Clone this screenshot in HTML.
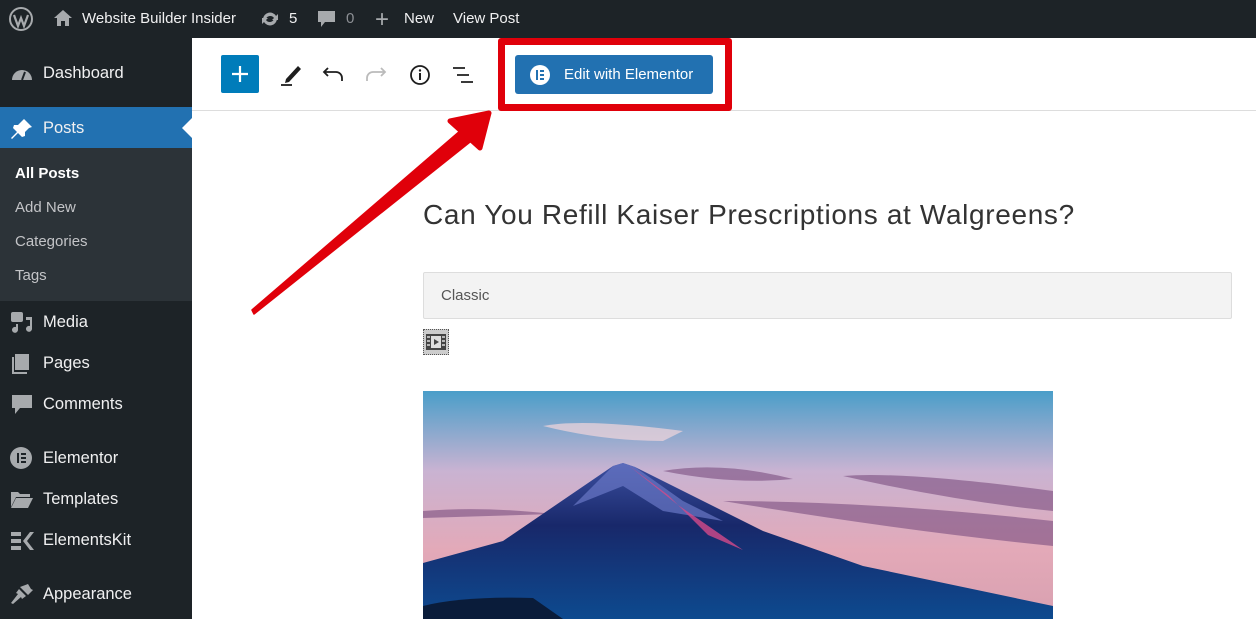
<!DOCTYPE html>
<html><head><meta charset="utf-8"><style>
*{margin:0;padding:0;box-sizing:border-box}
body{width:1256px;height:619px;overflow:hidden;background:#fff;font-family:"Liberation Sans",sans-serif;position:relative}
.bar{position:absolute;left:0;top:0;width:1256px;height:38px;background:#1d2327;color:#f0f0f1;font-size:15px}
.bar span{position:absolute;top:10px}
.side{position:absolute;left:0;top:38px;width:192px;height:581px;background:#1d2327}
.mi{position:absolute;left:43px;color:#f0f0f1;font-size:16.5px}
.ic{position:absolute;left:10px;width:24px;height:22px}
.sub{position:absolute;left:15px;color:#c3c4c7;font-size:15px}
.a{position:absolute}
</style></head><body>
<div class="bar">
<svg class="a" style="left:9px;top:7px" width="24" height="24" viewBox="0 0 24 24"><circle cx="12" cy="12" r="11" fill="none" stroke="#a7aaad" stroke-width="2"/><path d="M5 8l4 11 3-8 3 8 4-11" fill="none" stroke="#a7aaad" stroke-width="2.2"/></svg>
<svg class="a" style="left:53px;top:9px" width="20" height="18" viewBox="0 0 20 18"><path d="M10 1L1 9h3v8h4v-5h4v5h4V9h3z" fill="#a7aaad"/></svg>
<span style="left:82px">Website Builder Insider</span>
<svg class="a" style="left:259px;top:10px" width="22" height="18" viewBox="0 0 22 18"><path d="M4 9a7 7 0 0 1 13-3l2-2v6h-6l2-2a4.5 4.5 0 0 0-8 1zM18 9a7 7 0 0 1-13 3l-2 2V8h6l-2 2a4.5 4.5 0 0 0 8-1z" fill="#a7aaad"/></svg>
<span style="left:289px">5</span>
<svg class="a" style="left:317px;top:10px" width="20" height="20" viewBox="0 0 20 20"><path d="M1 1h17v11H8l-4 5v-5H1z" fill="#a7aaad"/></svg>
<span style="left:346px;color:#8c8f94">0</span>
<span style="left:375px;top:6px;font-size:24px;color:#a7aaad">+</span>
<span style="left:404px">New</span>
<span style="left:453px">View Post</span>
</div>
<div class="side">
<svg class="ic" style="top:25px" viewBox="0 0 24 22"><path d="M2 17a10 10 0 1 1 20 0z" fill="#a7aaad"/><path d="M12 17l3-8" stroke="#1d2327" stroke-width="2"/></svg>
<div class="mi" style="top:26px">Dashboard</div>
<div class="a" style="left:0;top:69px;width:192px;height:41px;background:#2271b1"></div>
<div class="a" style="left:182px;top:80px;width:0;height:0;border-top:10px solid transparent;border-bottom:10px solid transparent;border-right:10px solid #fff"></div>
<svg class="ic" style="top:79px" viewBox="0 0 24 22"><path d="M14 2l8 8-3 1-4 4 0 4-3 1-4-4-6 6-1-1 6-6-4-4 1-3h4l4-4z" fill="#fff"/></svg>
<div class="mi" style="top:81px">Posts</div>
<div class="a" style="left:0;top:110px;width:192px;height:153px;background:#2c3338"></div>
<div class="sub" style="top:127px;color:#fff;font-weight:bold">All Posts</div>
<div class="sub" style="top:161px">Add New</div>
<div class="sub" style="top:195px">Categories</div>
<div class="sub" style="top:229px">Tags</div>
<svg class="ic" style="top:273px" viewBox="0 0 24 22"><rect x="1" y="1" width="12" height="10" rx="2" fill="#a7aaad"/><path d="M16 6h6v12a3 3 0 1 1-2-3V9h-4zM8 13v6a3 3 0 1 1-2-3v-3z" fill="#a7aaad"/></svg>
<div class="mi" style="top:275px">Media</div>
<svg class="ic" style="top:314px" viewBox="0 0 24 22"><path d="M5 2h14v16H5z" fill="#a7aaad"/><path d="M2 5h2v15h13v2H2z" fill="#a7aaad"/></svg>
<div class="mi" style="top:316px">Pages</div>
<svg class="ic" style="top:356px" viewBox="0 0 24 22"><path d="M2 1h20v13H10l-5 6v-6H2z" fill="#a7aaad"/></svg>
<div class="mi" style="top:357px">Comments</div>
<svg class="ic" style="top:409px" viewBox="0 0 24 22"><circle cx="11" cy="11" r="11" fill="#a7aaad"/><path d="M7 6h2v10H7zM11 6h5v2h-5zM11 10h5v2h-5zM11 14h5v2h-5z" fill="#1d2327"/></svg>
<div class="mi" style="top:411px">Elementor</div>
<svg class="ic" style="top:451px" viewBox="0 0 24 22"><path d="M1 3h7l2 2h10v3H6l-5 10z" fill="#a7aaad"/><path d="M6 9h17l-5 10H1z" fill="#a7aaad"/></svg>
<div class="mi" style="top:452px">Templates</div>
<svg class="ic" style="top:492px" viewBox="0 0 24 22"><path d="M1 2h10v4H1zM1 9h10v4H1zM1 16h10v4H1zM20 2l-7 9 7 9h4l-7-9 7-9z" fill="#a7aaad"/></svg>
<div class="mi" style="top:493px">ElementsKit</div>
<svg class="ic" style="top:545px" viewBox="0 0 24 22"><path d="M10 4l8 8 5-5-2-1-3-5zM9 6l-3 4 2 1-7 9 2 1 8-7 1 2 4-3z" fill="#a7aaad"/></svg>
<div class="mi" style="top:547px">Appearance</div>
</div>
<div class="a" style="left:192px;top:110px;width:1064px;height:1px;background:#ddd"></div>
<div class="a" style="left:221px;top:55px;width:38px;height:38px;background:#007cba;border-radius:2px"></div>
<svg class="a" style="left:221px;top:55px" width="38" height="38"><path d="M19 11v16M11 19h16" stroke="#fff" stroke-width="2.2"/></svg>
<svg class="a" style="left:278px;top:60px" width="26" height="28" viewBox="0 0 26 28"><path d="M8 19l12-13 3 3-12 13-4 1z" fill="#1e1e1e"/><path d="M3 25h11" stroke="#1e1e1e" stroke-width="1.8"/></svg>
<svg class="a" style="left:322px;top:64px" width="24" height="20"><path d="M6 4L2 8l4 4M2 8h12a6 6 0 0 1 6 6v3" fill="none" stroke="#1e1e1e" stroke-width="1.8"/></svg>
<svg class="a" style="left:365px;top:64px" width="24" height="20"><path d="M16 4l4 4-4 4M20 8H8a6 6 0 0 0-6 6v3" fill="none" stroke="#bbb" stroke-width="1.8"/></svg>
<svg class="a" style="left:408px;top:63px" width="24" height="24"><circle cx="12" cy="12" r="9" fill="none" stroke="#1e1e1e" stroke-width="1.8"/><path d="M12 10v7" stroke="#1e1e1e" stroke-width="2"/><circle cx="12" cy="7.5" r="1.2" fill="#1e1e1e"/></svg>
<svg class="a" style="left:450px;top:63px" width="26" height="24"><path d="M3 5h12M7 12h12M11 19h12" stroke="#1e1e1e" stroke-width="1.8"/></svg>
<div class="a" style="left:498px;top:38px;width:234px;height:73px;border:7px solid #e0000a;border-radius:3px"></div>
<div class="a" style="left:515px;top:55px;width:198px;height:39px;background:#2271b1;border-radius:3px;color:#fff;font-size:15px;line-height:39px;padding-left:49px">Edit with Elementor</div>
<svg class="a" style="left:529px;top:64px" width="22" height="22"><circle cx="11" cy="11" r="10" fill="#fff"/><path d="M7 6h2v10H7zM11 6h4v2h-4zM11 10h4v2h-4zM11 14h4v2h-4z" fill="#2271b1"/></svg>
<svg class="a" style="left:240px;top:100px" width="270" height="230"><path d="M12 210L14 214 230 42 220 31z" fill="#e0000a" stroke="#e0000a" stroke-width="1.5" stroke-linejoin="round"/><path d="M249 13L210 21 240 48z" fill="#e0000a" stroke="#e0000a" stroke-width="5" stroke-linejoin="round"/></svg>
<div class="a" style="left:423px;top:199px;font-size:28px;color:#333;letter-spacing:0.65px">Can You Refill Kaiser Prescriptions at Walgreens?</div>
<div class="a" style="left:423px;top:272px;width:809px;height:47px;background:#f3f3f3;border:1px solid #ddd;border-radius:2px;color:#555;font-size:15px;line-height:45px;padding-left:17px">Classic</div>
<div class="a" style="left:423px;top:329px;width:26px;height:26px;border:1px dotted #555;background:#ccc"></div>
<svg class="a" style="left:426px;top:334px" width="20" height="16"><rect x="0" y="0" width="20" height="16" fill="#444"/><rect x="5" y="2" width="10" height="12" fill="#ddd"/><path d="M8 5l5 3-5 3z" fill="#444"/><path d="M1 3h3M1 7h3M1 11h3M16 3h3M16 7h3M16 11h3" stroke="#ddd" stroke-width="1.5"/></svg>
<svg class="a" style="left:423px;top:391px" width="630" height="228" viewBox="0 0 630 228">
<defs><linearGradient id="s" x1="0" y1="0" x2="0" y2="1"><stop offset="0" stop-color="#4a9ec9"/><stop offset="0.35" stop-color="#c9b3d2"/><stop offset="0.7" stop-color="#e3a9b8"/><stop offset="1" stop-color="#d8a0b0"/></linearGradient>
<linearGradient id="m" x1="0" y1="0" x2="0" y2="1"><stop offset="0" stop-color="#3c4fa0"/><stop offset="0.4" stop-color="#18286a"/><stop offset="1" stop-color="#0d4a8f"/></linearGradient></defs>
<rect width="630" height="228" fill="url(#s)"/>
<path d="M120 35q40-8 140 5l-20 10q-60 0-120-15z" fill="#f2d5dc" opacity=".7"/>
<path d="M240 80q60-10 130 8-60 6-130-8zM420 85q60-5 210 15v20q-100-10-210-35zM300 110q150 0 330 20v25q-150-15-330-45zM0 120q60-5 130 3l-130 4z" fill="#7a4d7f" opacity=".6"/>
<path d="M0 172L80 150 190 75 200 72 212 76 340 140 440 175 630 215V228H0z" fill="url(#m)"/>
<path d="M190 75L200 72 212 76 260 110 300 130 240 120 200 95 150 115z" fill="#6a78c6" opacity=".7"/>
<path d="M205 74l50 40 65 45-35-15-40-40z" fill="#d44a8a" opacity=".8"/>
<path d="M0 215q40-10 110-8l30 21H0z" fill="#0a1c3a"/>
</svg>
</body></html>
